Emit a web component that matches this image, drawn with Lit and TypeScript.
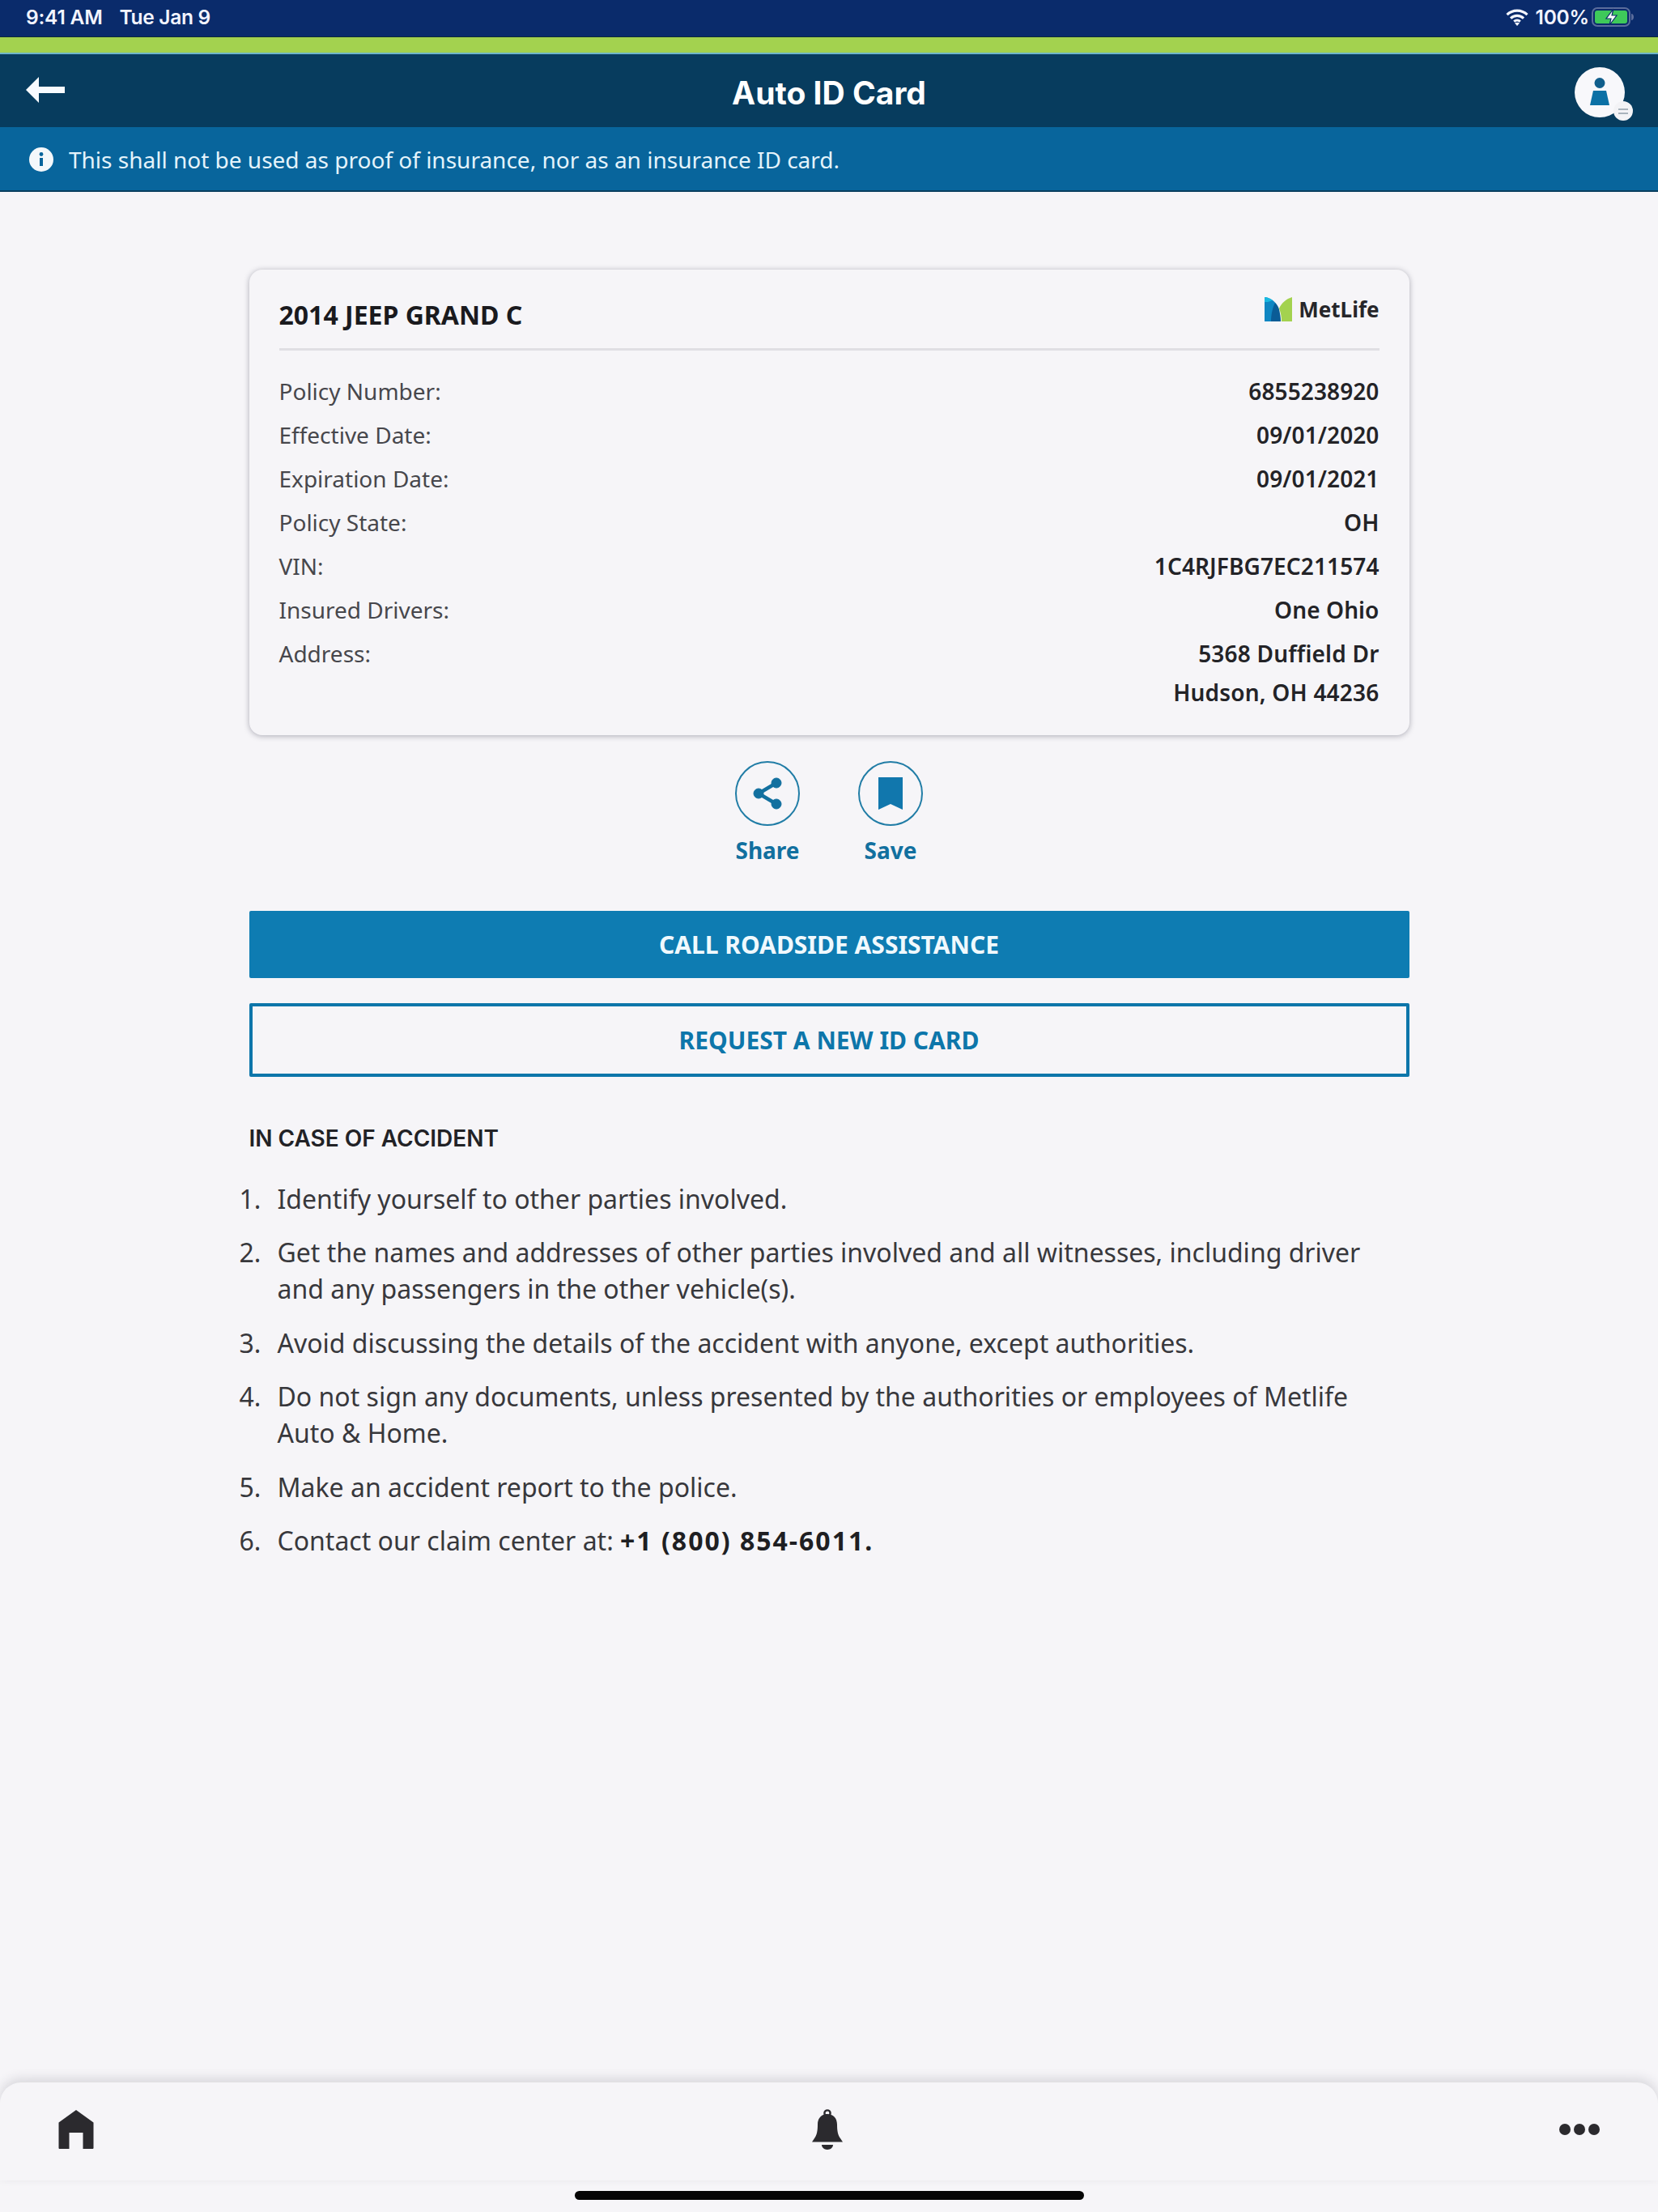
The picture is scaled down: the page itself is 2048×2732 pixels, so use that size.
import { LitElement, html, css } from "lit";
import { customElement } from "lit/decorators.js";

const rows: [string, string][] = [
  ["Policy Number:", "6855238920"],
  ["Effective Date:", "09/01/2020"],
  ["Expiration Date:", "09/01/2021"],
  ["Policy State:", "OH"],
  ["VIN:", "1C4RJFBG7EC211574"],
  ["Insured Drivers:", "One Ohio"],
];

@customElement("app-root")
export class AppRoot extends LitElement {
  static styles = css`
    :host { display: block; width: 2048px; font-family: "Noto Sans", sans-serif; color: #222; }
    * { box-sizing: border-box; }
    .page { min-height: 2732px; display: flex; flex-direction: column; background: #f6f5f8; }
    .status { height: 45px; background: #0a2b6b; color: #f2f4ff; display: flex; align-items: center; padding: 0 30px 3px 32px; font: 600 24.5px Inter, sans-serif; letter-spacing: -0.2px; }
    .status .date { margin-left: 15px; letter-spacing: -0.3px; }
    .status .right { margin-left: auto; display: flex; align-items: center; gap: 3px; }
    .wifi { margin-right: 6px; }
    .green { height: 22px; background: #a3d24f; border-top: 1px solid #0b2a3a; border-bottom: 2px solid #6fb6c8; }
    .header { height: 90px; background: #073c5e; color: #fff; display: grid; grid-template-columns: 1fr auto 1fr; align-items: center; padding: 0 32px; }
    .back { display: block; margin-top: -2px; }
    .title { font: 700 39px Inter, sans-serif; letter-spacing: 0; margin-top: 5px; }
    .avatar { justify-self: end; position: relative; width: 62px; height: 62px; border-radius: 50%; background: #f8f8fb; display: flex; align-items: center; justify-content: center; margin-right: 9px; margin-top: 4px; }
    .badge { position: absolute; right: -10px; bottom: -4px; width: 24px; height: 24px; border-radius: 50%; background: #f3f3f6; display: flex; flex-direction: column; align-items: center; justify-content: center; gap: 3px; }
    .badge i { display: block; width: 12px; height: 2px; background: #a9b3bc; }
    .notice { height: 80px; background: #08659c; color: #e4f3fb; display: flex; align-items: center; gap: 19px; padding: 2px 0 0 36px; font-size: 28px; border-bottom: 2px solid #0a3f5f; }
    .main { width: 1433px; margin: 96px auto 0; }
    .card { border-radius: 16px; background: #f6f5f8; box-shadow: 0 1px 7px rgba(40,40,60,.36); padding: 0 37px; height: 575px; }
    .card-head { height: 100px; display: flex; justify-content: space-between; align-items: center; border-bottom: 3px solid #e0dfe3; }
    .vehicle { font-size: 32px; font-weight: 700; color: #1a1a1e; padding-top: 14px; }
    .brand { display: flex; align-items: center; gap: 8px; font-size: 26px; font-weight: 700; color: #26262a; margin-top: 0; }
    .rows { padding-top: 23px; }
    .row { display: flex; justify-content: space-between; height: 54px; font-size: 28px; line-height: 54px; color: #47474c; }
    .row b { color: #232327; font-weight: 600; letter-spacing: 0.1px; }
    .addr { display: flex; justify-content: space-between; font-size: 28px; line-height: 48px; color: #47474c; padding-top: 3px; }
    .addr b { color: #232327; font-weight: 600; text-align: right; letter-spacing: 0.2px; }
    .actions { display: flex; justify-content: center; gap: 64px; margin-top: 32px; }
    .action { width: 88px; display: flex; flex-direction: column; align-items: center; gap: 11px; font-size: 28px; font-weight: 700; color: #12709f; }
    .circle { width: 80px; height: 80px; border-radius: 50%; border: 2px solid #217da6; display: flex; align-items: center; justify-content: center; }
    .btn { display: flex; align-items: center; justify-content: center; font-size: 30px; font-weight: 700; border-radius: 2px; }
    .primary { height: 83px; margin-top: 56px; background: #0e7cb2; color: #f0f9fd; }
    .outline { height: 91px; margin-top: 31px; border: 4px solid #0d76aa; color: #0d76aa; }
    h2 { margin: 60px 0 0; font: 600 28px Inter, sans-serif; color: #222226; line-height: 32px; letter-spacing: 0; }
    ol { list-style: none; margin: 36px 0 0; padding: 0; font-size: 32px; line-height: 45px; color: #38383c; width: 1432px; }
    li { display: flex; margin-bottom: 21.4px; margin-left: -12px; }
    li .n { width: 47px; flex: none; }
    li b { font-weight: 700; color: #1f1f23; letter-spacing: 2px; }
    .nav { margin-top: auto; height: 121px; background: #f6f5f8; border-radius: 26px 26px 0 0; box-shadow: 0 -5px 14px rgba(40,40,60,.14); display: flex; justify-content: space-between; align-items: center; padding: 0 72px 0 70px; }
    .nav svg { display: block; margin-top: -6px; }
    .indicator { height: 39px; display: flex; justify-content: center; padding-top: 13px; }
    .indicator i { display: block; width: 629px; height: 11px; border-radius: 6px; background: #050505; }
  `;

  render() {
    return html`
      <div class="page">
        <div class="status">
          <span>9:41 AM</span><span class="date">&nbsp;Tue Jan 9</span>
          <span class="right">
            <svg class="wifi" width="28" height="22" viewBox="0 0 28 22" fill="none" stroke="#f4f6ff" stroke-width="3.2">
              <path d="M1.5 8.2C8.5 1.4 19.5 1.4 26.5 8.2"/><path d="M6 12.6c4.6-4.2 11.4-4.2 16 0"/><path d="M10.2 16.6c2.2-1.9 5.4-1.9 7.6 0"/>
              <path d="M14 22l-3-3.4c1.8-1.2 4.2-1.2 6 0z" fill="#f4f6ff" stroke="none"/>
            </svg>
            <span>100%</span>
            <svg width="52" height="24" viewBox="0 0 52 24">
              <rect x="1" y="1" width="46" height="22" rx="6" fill="none" stroke="#5b6d9c" stroke-width="2"/>
              <rect x="4" y="4" width="40" height="16" rx="3" fill="#3ec95a"/>
              <path d="M49 8c2 0 3 2 3 4s-1 4-3 4z" fill="#5b6d9c"/>
              <path d="M27 2l-9 12h6l-2 8 9-12h-6z" fill="#fff" stroke="#0a2b6b" stroke-width="1.2"/>
            </svg>
          </span>
        </div>
        <div class="green"></div>
        <div class="header">
          <svg class="back" width="48" height="32" viewBox="0 0 48 32"><path d="M16 0v12h32v8H16v12L0 16z" fill="#f8fbff"/></svg>
          <div class="title">Auto ID Card</div>
          <div class="avatar">
            <svg width="26" height="36" viewBox="0 0 26 36"><circle cx="13" cy="6.5" r="6.5" fill="#115f8c"/><path d="M5 16h16l4 18H1z" fill="#0b70a5"/></svg>
            <div class="badge"><i></i><i></i></div>
          </div>
        </div>
        <div class="notice">
          <svg width="30" height="30" viewBox="0 0 30 30"><circle cx="15" cy="15" r="15" fill="#f4f8fb"/><rect x="13" y="13" width="4" height="10" fill="#08659c"/><circle cx="15" cy="8.5" r="2.4" fill="#08659c"/></svg>
          <span>This shall not be used as proof of insurance, nor as an insurance ID card.</span>
        </div>
        <div class="main">
          <div class="card">
            <div class="card-head">
              <span class="vehicle">2014 JEEP GRAND C</span>
              <span class="brand">
                <svg width="34" height="30" viewBox="0 0 34 30">
                  <path d="M0 0c9 1 15 7 17 14v16H0z" fill="#0f86c2"/>
                  <path d="M8 30c0-9 2-17 5-23 3 3 4 5 5 8 1 5 2 10 2 15z" fill="#0a5c96"/>
                  <path d="M34 0v30H21c0-6-1-11-3-16C21 7 27 2 34 0z" fill="#a3d24f"/>
                  <path d="M0 0c4 0 7 2 10 4L4 6H0z" fill="#19b8e0"/>
                </svg>
                MetLife
              </span>
            </div>
            <div class="rows">
              ${rows.map(([k, v]) => html`<div class="row"><span>${k}</span><b>${v}</b></div>`)}
              <div class="addr"><span>Address:</span><b>5368 Duffield Dr<br />Hudson, OH 44236</b></div>
            </div>
          </div>
          <div class="actions">
            <div class="action">
              <div class="circle">
                <svg width="36" height="40" viewBox="0 0 36 40" fill="#12709f" stroke="#12709f">
                  <path d="M29 7L7 20l22 13" fill="none" stroke-width="4.5"/>
                  <circle cx="29" cy="7" r="6"/><circle cx="7" cy="20" r="6"/><circle cx="29" cy="33" r="6"/>
                </svg>
              </div>
              <span>Share</span>
            </div>
            <div class="action">
              <div class="circle">
                <svg width="30" height="40" viewBox="0 0 30 40"><path d="M0 0h30v40L15 33 0 40z" fill="#1177ad"/></svg>
              </div>
              <span>Save</span>
            </div>
          </div>
          <div class="btn primary">CALL ROADSIDE ASSISTANCE</div>
          <div class="btn outline">REQUEST A NEW ID CARD</div>
          <h2>IN CASE OF ACCIDENT</h2>
          <ol>
            <li><span class="n">1.</span><span>Identify yourself to other parties involved.</span></li>
            <li><span class="n">2.</span><span>Get the names and addresses of other parties involved and all witnesses, including driver and any passengers in the other vehicle(s).</span></li>
            <li><span class="n">3.</span><span>Avoid discussing the details of the accident with anyone, except authorities.</span></li>
            <li><span class="n">4.</span><span>Do not sign any documents, unless presented by the authorities or employees of Metlife Auto &amp; Home.</span></li>
            <li><span class="n">5.</span><span>Make an accident report to the police.</span></li>
            <li><span class="n">6.</span><span>Contact our claim center at: <b>+1 (800) 854-6011.</b></span></li>
          </ol>
        </div>
        <div class="nav">
          <svg width="48" height="48" viewBox="0 0 48 48"><path d="M24 0L45.500 15.500V47a1 1 0 0 1-1 1H32.500V28H15.500v20H3.500a1 1 0 0 1-1-1V15.500z" fill="#2b2a2e"/></svg>
          <svg width="38" height="50" viewBox="0 0 38 50" fill="#2b2a2e">
            <circle cx="19" cy="5" r="3.6" fill="none" stroke="#2b2a2e" stroke-width="2.4"/>
            <path d="M19 6c7 0 12 5 12 13 0 8 1 13 4 17l3 4.600H0L3 36c3-4 4-9 4-17C7 11 12 6 19 6z"/>
            <path d="M12 44h14c0 3-3 6-7 6s-7-3-7-6z"/>
          </svg>
          <svg width="50" height="14" viewBox="0 0 50 14"><circle cx="7" cy="7" r="7" fill="#2b2a2e"/><circle cx="25" cy="7" r="7" fill="#2b2a2e"/><circle cx="43" cy="7" r="7" fill="#2b2a2e"/></svg>
        </div>
        <div class="indicator"><i></i></div>
      </div>
    `;
  }
}
